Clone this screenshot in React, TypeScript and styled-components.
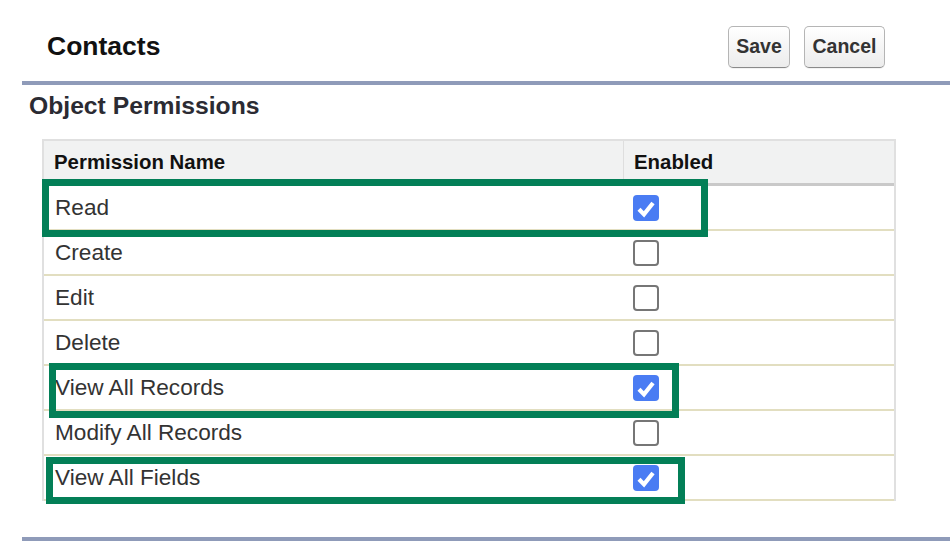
import styled, { createGlobalStyle } from 'styled-components';

const GlobalStyle = createGlobalStyle`
  body {
    margin: 0;
    background: #fff;
    font-family: "Liberation Sans", Arial, sans-serif;
  }
`;

const Page = styled.div`
  padding-left: 22px;
  overflow: hidden;
`;

const PageHeader = styled.div`
  display: flex;
  align-items: center;
  justify-content: space-between;
  box-sizing: border-box;
  height: 85px;
  padding: 12px 65px 0 25px;
  border-bottom: 4px solid #8f9bb9;
`;

const Title = styled.h1`
  margin: 0;
  font-size: 26.5px;
  font-weight: bold;
  color: #111;
`;

const ButtonGroup = styled.div`
  display: flex;
  gap: 14px;
`;

const Button = styled.button<{ $width: number }>`
  width: ${(p) => p.$width}px;
  height: 42px;
  padding: 0;
  font-family: "Liberation Sans", Arial, sans-serif;
  font-size: 19.5px;
  font-weight: bold;
  color: #333;
  background: linear-gradient(#ffffff, #ececec);
  border: 1px solid #b5b5b5;
  border-bottom-color: #8a8a8a;
  border-radius: 5px;
  box-shadow: 0 1px 0 rgba(0, 0, 0, 0.05);
`;

const SectionTitle = styled.h2`
  margin: 6px 0 18px 7px;
  font-size: 24.7px;
  line-height: 30px;
  font-weight: bold;
  color: #2b2b33;
`;

const TableWrap = styled.div`
  position: relative;
  margin-left: 20px;
  width: 854px;
  box-sizing: border-box;
  border-left: 2px solid #e0e0e0;
  border-right: 2px solid #e0e0e0;
`;

const HeaderRow = styled.div`
  display: grid;
  grid-template-columns: 579px 1fr;
  height: 47px;
  box-sizing: border-box;
  background: #f1f2f2;
  border-top: 2px solid #e0e0e0;
  border-bottom: 3px solid #c9c9c9;
`;

const HeaderCell = styled.div<{ $divider?: boolean }>`
  display: flex;
  align-items: center;
  padding-left: 10px;
  font-size: 20.4px;
  font-weight: bold;
  color: #111;
  border-left: ${(p) => (p.$divider ? '1px solid #dedede' : 'none')};
`;

const Row = styled.div`
  display: grid;
  grid-template-columns: 579px 1fr;
  height: 45px;
  box-sizing: border-box;
  border-bottom: 2px solid #e2dec0;
`;

const NameCell = styled.div`
  display: flex;
  align-items: center;
  padding-left: 11px;
  font-size: 22.6px;
  color: #333;
`;

const CheckCell = styled.div`
  display: flex;
  align-items: center;
  padding-left: 10px;
`;

const Box = styled.div<{ $checked: boolean }>`
  width: 26px;
  height: 26px;
  box-sizing: border-box;
  border-radius: 4px;
  background: ${(p) => (p.$checked ? '#4a7cf3' : '#fff')};
  border: ${(p) => (p.$checked ? 'none' : '2px solid #767676')};
  display: flex;
  align-items: center;
  justify-content: center;
`;

const Highlight = styled.div<{ $x: number; $y: number; $w: number; $h: number }>`
  position: absolute;
  left: ${(p) => p.$x}px;
  top: ${(p) => p.$y}px;
  width: ${(p) => p.$w}px;
  height: ${(p) => p.$h}px;
  box-sizing: border-box;
  border: 7px solid #037f57;
  pointer-events: none;
`;

const FooterRule = styled.div`
  margin-top: 36px;
  border-top: 4px solid #8f9bb9;
`;

const permissions = [
  { name: 'Read', enabled: true },
  { name: 'Create', enabled: false },
  { name: 'Edit', enabled: false },
  { name: 'Delete', enabled: false },
  { name: 'View All Records', enabled: true },
  { name: 'Modify All Records', enabled: false },
  { name: 'View All Fields', enabled: true },
];

// annotation boxes, relative to the table
const highlights = [
  { x: -2, y: 40, w: 666, h: 58 },
  { x: 5, y: 224, w: 630, h: 55 },
  { x: 2, y: 318, w: 639, h: 47 },
];

function Checkbox({ checked }: { checked: boolean }) {
  return (
    <Box $checked={checked}>
      {checked && (
        <svg width="26" height="26" viewBox="0 0 26 26">
          <path d="M6 14.2 L11 19.4 L20 8" fill="none" stroke="#fff" strokeWidth="4.2" strokeLinejoin="miter" />
        </svg>
      )}
    </Box>
  );
}

export default function App() {
  return (
    <Page>
      <GlobalStyle />
      <PageHeader>
        <Title>Contacts</Title>
        <ButtonGroup>
          <Button $width={62}>Save</Button>
          <Button $width={81}>Cancel</Button>
        </ButtonGroup>
      </PageHeader>
      <SectionTitle>Object Permissions</SectionTitle>
      <TableWrap>
        <HeaderRow>
          <HeaderCell>Permission Name</HeaderCell>
          <HeaderCell $divider>Enabled</HeaderCell>
        </HeaderRow>
        {permissions.map((p) => (
          <Row key={p.name}>
            <NameCell>{p.name}</NameCell>
            <CheckCell>
              <Checkbox checked={p.enabled} />
            </CheckCell>
          </Row>
        ))}
        {highlights.map((h, i) => (
          <Highlight key={i} $x={h.x} $y={h.y} $w={h.w} $h={h.h} />
        ))}
      </TableWrap>
      <FooterRule />
    </Page>
  );
}
